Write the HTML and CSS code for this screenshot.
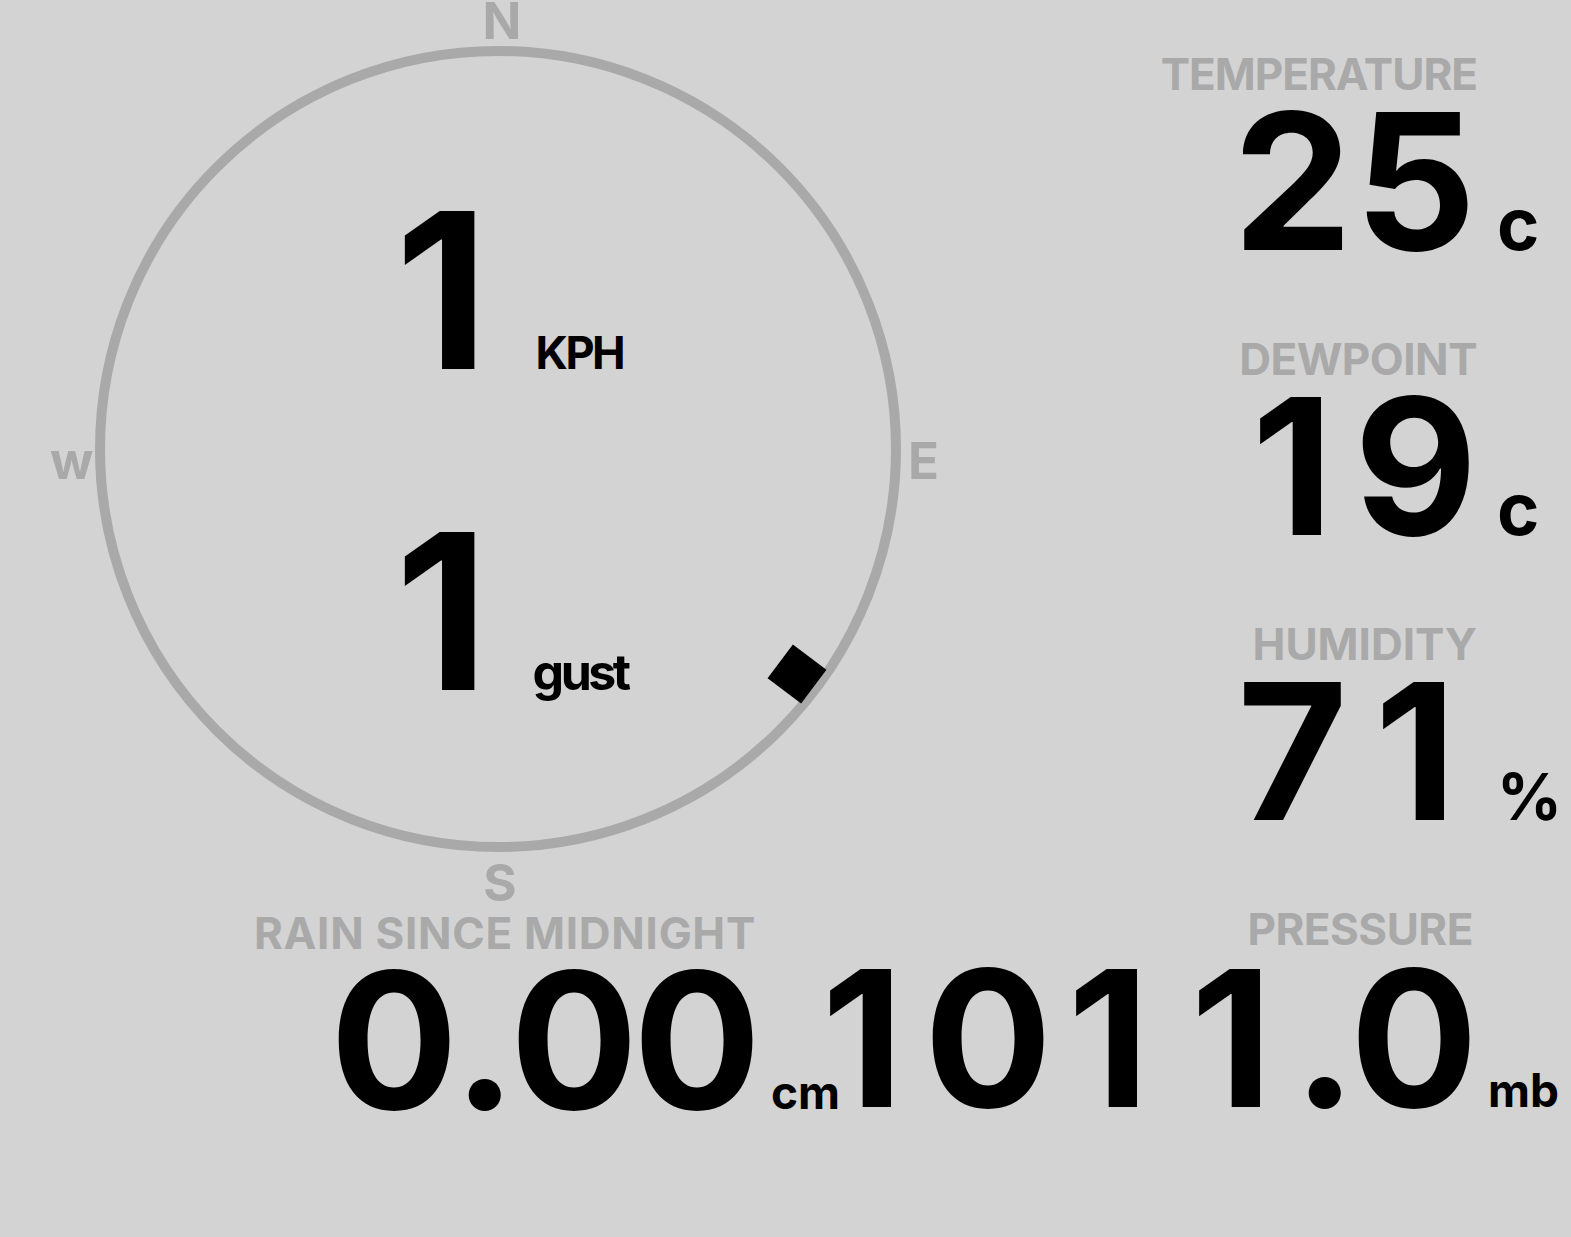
FILE: index.html
```html
<!DOCTYPE html>
<html lang="en">
<head>
<meta charset="utf-8">
<title>Weather</title>
<link rel="stylesheet" href="styles.css">
</head>
<body>
<div class="page">
  <div class="top">
    <div class="compass">
      <svg class="dial" width="940" height="907" viewBox="0 0 940 907" xmlns="http://www.w3.org/2000/svg">
        <circle cx="498" cy="449" r="398" fill="none" stroke="#a9a9a9" stroke-width="10"/>
        <rect x="-21" y="-21" width="42" height="42" fill="#000" transform="translate(797 674) rotate(37)"/>
      </svg>
      <span class="cardinal north">N</span>
      <span class="cardinal east">E</span>
      <span class="cardinal south">S</span>
      <span class="cardinal west">w</span>
      <div class="speeds">
        <div class="speed"><span class="speed-val">1</span><span class="speed-unit">KPH</span></div>
        <div class="speed"><span class="speed-val">1</span><span class="speed-unit gust">gust</span></div>
      </div>
    </div>
    <div class="readings">
      <div class="reading">
        <div class="label tight">TEMPERATURE</div>
        <div class="value"><span class="d">2</span><span class="d">5</span></div>
        <div class="unit">c</div>
      </div>
      <div class="reading">
        <div class="label">DEWPOINT</div>
        <div class="value"><span class="d">1</span><span class="d">9</span></div>
        <div class="unit">c</div>
      </div>
      <div class="reading">
        <div class="label even">HUMIDITY</div>
        <div class="value"><span class="d">7</span><span class="d">1</span></div>
        <div class="unit pct">%</div>
      </div>
    </div>
  </div>
  <div class="bottom">
    <div class="reading rain">
      <div class="label loose">RAIN SINCE MIDNIGHT</div>
      <div class="value"><span class="d">0</span><span class="pt">.</span><span class="d">0</span><span class="d">0</span></div>
      <div class="unit small">cm</div>
    </div>
    <div class="reading pressure">
      <div class="label">PRESSURE</div>
      <div class="value"><span class="d">1</span><span class="d">0</span><span class="d">1</span><span class="d">1</span><span class="pt">.</span><span class="d">0</span></div>
      <div class="unit small">mb</div>
    </div>
  </div>
</div>
</body>
</html>
```
FILE: styles.css
```css
html, body {
  margin: 0;
  padding: 0;
  background: #d3d3d3;
}
body {
  font-family: Inter, "Liberation Sans", sans-serif;
  font-weight: 700;
  color: #000;
  width: 1571px;
  height: 1237px;
  overflow: hidden;
}
.top {
  display: grid;
  grid-template-columns: 940px 1fr;
}
.compass {
  position: relative;
  width: 940px;
  height: 907px;
}
.dial {
  display: block;
}
.cardinal {
  position: absolute;
  font-size: 51px;
  line-height: 0.8;
  color: #a9a9a9;
}
.north {
  left: 502px;
  top: 1px;
  transform: translateX(-50%);
}
.south {
  left: 500px;
  top: 863px;
  transform: translateX(-50%);
}
.east {
  left: 908px;
  top: 441px;
}
.west {
  left: 50px;
  top: 441px;
}
.speeds {
  position: absolute;
  left: 395px;
  top: 182px;
  display: flex;
  flex-direction: column;
  gap: 104px;
}
.speed {
  display: flex;
  align-items: baseline;
}
.speed-val {
  font-size: 217px;
  line-height: 1;
}
.speed-unit {
  font-size: 45px;
  line-height: 1;
  letter-spacing: -2.5px;
  margin-left: 47px;
}
.speed-unit.gust {
  font-size: 50px;
  letter-spacing: -3.5px;
  margin-left: 44px;
}
.readings {
  display: flex;
  flex-direction: column;
  align-items: flex-end;
  padding-top: 52px;
  gap: 70px;
}
.reading {
  display: grid;
  grid-template-columns: auto 94px;
  align-items: baseline;
}
.label {
  grid-column: 1;
  grid-row: 1;
  justify-self: end;
  font-size: 44px;
  line-height: 1;
  letter-spacing: -0.5px;
  color: #a9a9a9;
  white-space: nowrap;
}
.label.tight {
  letter-spacing: -1px;
}
.label.even {
  letter-spacing: 0;
}
.label.loose {
  letter-spacing: 0.7px;
}
.value {
  grid-column: 1;
  grid-row: 2;
  justify-self: end;
  font-size: 190px;
  line-height: 0.9;
  white-space: nowrap;
}
.d {
  display: inline-block;
  width: 123px;
  text-align: center;
}
.pt {
  display: inline-block;
  width: 57px;
  text-align: center;
}
.unit {
  grid-column: 2;
  grid-row: 2;
  margin-left: 20px;
  font-size: 72px;
  line-height: 1;
  white-space: nowrap;
}
.unit.pct {
  font-size: 64px;
}
.unit.small {
  font-size: 46px;
  margin-left: 15px;
}
.bottom {
  display: flex;
  justify-content: flex-end;
}
.pressure {
  grid-template-columns: auto 98px;
}
.rain {
  grid-template-columns: auto 45px;
  margin-top: 4px;
}
```
